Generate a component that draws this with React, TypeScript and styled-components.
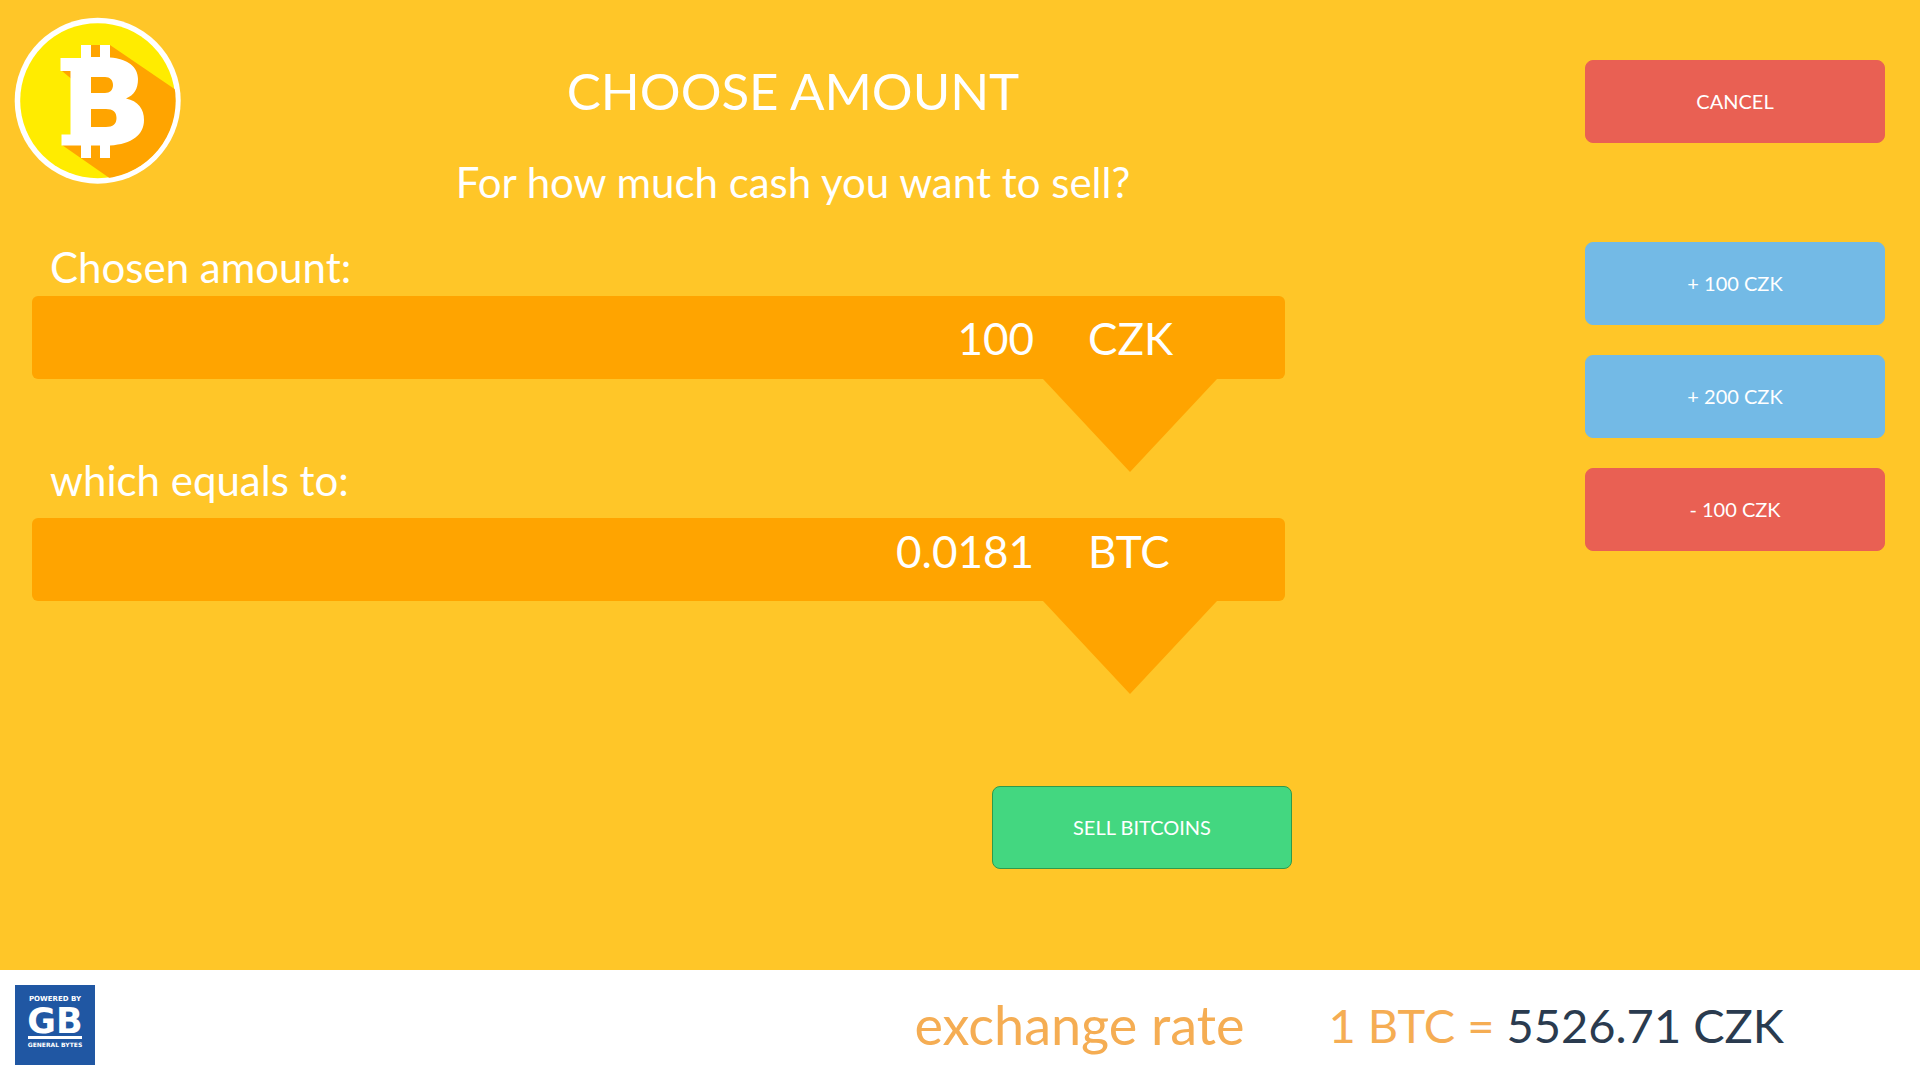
import React, { useState } from "react";
import styled, { createGlobalStyle } from "styled-components";

const GlobalStyle = createGlobalStyle`
  *, *::before, *::after { box-sizing: border-box; }
  body {
    margin: 0;
    background: #ffc628;
    color: #ffffff;
    font-family: Lato, "Open Sans", sans-serif;
  }
`;

const Screen = styled.div`
  display: flex;
  flex-direction: column;
  min-height: 100vh;
`;

const Main = styled.main`
  flex: 1;
  display: flex;
  gap: 180px;
  padding-right: 35px;
`;

const Content = styled.div`
  flex: 1;
  min-width: 0;
`;

const Header = styled.header`
  display: flex;
  align-items: flex-start;
  padding: 17px 0 0 14px;
`;

const Logo = styled.svg`
  flex: none;
  width: 167px;
  height: 167px;
`;

const Headings = styled.div`
  flex: 1;
  display: flex;
  flex-direction: column;
  gap: 31px;
  padding-top: 42px;
  text-align: center;
`;

const Title = styled.h1`
  margin: 0;
  font-size: 51px;
  line-height: 64px;
  font-weight: 400;
`;

const Subtitle = styled.p`
  margin: 0;
  font-size: 42px;
  line-height: 56px;
`;

const Converter = styled.form`
  display: flex;
  flex-direction: column;
  margin: 34px 113px 0 32px;
`;

const Panel = styled.div`
  margin-right: 7px;
`;

const Label = styled.label`
  display: block;
  padding-left: 18px;
  font-size: 42px;
  line-height: 46px;
`;

const Bar = styled.div<{ $raised?: boolean }>`
  display: flex;
  justify-content: flex-end;
  align-items: center;
  gap: 54px;
  height: 83px;
  padding-bottom: ${(p) => (p.$raised ? 18 : 0)}px;
  border-radius: 6px;
  background: #ffa400;
  font-size: 44px;
  line-height: 56px;
`;

const FirstBar = styled(Bar)`
  margin-top: 6px;
`;

const Unit = styled.span`
  width: 197px;
`;

const Link = styled.div`
  display: flex;
  justify-content: space-between;
  align-items: flex-start;
  min-height: 139px;
`;

const LinkLabel = styled(Label)`
  padding-top: 78px;
`;

const Arrow = styled.div`
  width: 174px;
  height: 93px;
  margin: 0 68px 0 auto;
  background: #ffa400;
  clip-path: polygon(0 0, 100% 0, 50% 100%);
`;

const Button = styled.button<{ $tone: string; $edge?: string }>`
  width: 300px;
  height: 83px;
  padding: 0 0 2px;
  border: 1px solid ${(p) => p.$edge ?? p.$tone};
  border-radius: 8px;
  background: ${(p) => p.$tone};
  color: #ffffff;
  font: 400 20px/28px Lato, "Open Sans", sans-serif;
  cursor: pointer;
`;

const SellButton = styled(Button)`
  align-self: flex-end;
  margin-top: 46px;
`;

const Side = styled.aside`
  display: flex;
  flex-direction: column;
  gap: 99px;
  padding-top: 60px;
`;

const Steps = styled.div`
  display: flex;
  flex-direction: column;
  gap: 30px;
`;

const Footer = styled.footer`
  display: flex;
  align-items: center;
  height: 110px;
  padding: 0 136px 0 15px;
  background: #ffffff;
  color: #f5ad53;
`;

const Badge = styled.div`
  display: flex;
  flex-direction: column;
  align-items: center;
  width: 80px;
  height: 80px;
  margin-right: auto;
  padding-top: 10px;
  background: #2057a3;
  color: #ffffff;
  font-family: "DejaVu Sans", sans-serif;
  font-weight: 700;
`;

const BadgeTop = styled.span`
  font-size: 7px;
  line-height: 8px;
`;

const BadgeMark = styled.span`
  margin-top: 3px;
  font-size: 35px;
  line-height: 30px;
`;

const BadgeBottom = styled.span`
  width: 54px;
  padding-top: 2px;
  border-top: 3px solid #ffffff;
  display: flex;
  justify-content: center;
  white-space: nowrap;
  font-size: 6px;
  line-height: 8px;
`;

const RateLabel = styled.span`
  margin-right: 84px;
  font-size: 54px;
  line-height: 66px;
`;

const Rate = styled.span`
  font-size: 47px;
  line-height: 64px;
`;

const Price = styled.span`
  color: #2a3b4f;
`;

const BTC_PER_CZK = 1 / 5526.71;

function BitcoinLogo() {
  return (
    <Logo viewBox="14 17 167 167" role="img" aria-label="Bitcoin">
      <clipPath id="disc">
        <circle cx="97.7" cy="100.7" r="78" />
      </clipPath>
      <circle cx="97.7" cy="100.7" r="83" fill="#ffffff" />
      <circle cx="97.7" cy="100.7" r="77.5" fill="#ffec00" />
      <path
        clipPath="url(#disc)"
        fill="#ffa400"
        d="M91 45H110L195 103V200H142L108 177L62 145L80 140V86L62 71L91 65Z"
      />
      <path
        fill="#ffffff"
        fillRule="evenodd"
        d="M81 45H91V57H100V45H110V57.5C128 59 138 67 138 79C138 89 134 95 126 98.500C138 101 144 109 144 120C144 135 132 144 110 145.500V158H100V145.500H91V158H81V145.500H61.500V134.500H70.500V71H60.500V58H81ZM91 77V93H105C110 93 113 90 113 85C113 80 110 77 105 77ZM91 109V127H106C113 127 116.500 124 116.500 118C116.500 112 113 109 106 109Z"
      />
    </Logo>
  );
}

export default function App() {
  const [amount, setAmount] = useState(100);
  const change = (step: number) => setAmount((a) => Math.max(0, a + step));

  return (
    <Screen>
      <GlobalStyle />
      <Main>
        <Content>
          <Header>
            <BitcoinLogo />
            <Headings>
              <Title>CHOOSE AMOUNT</Title>
              <Subtitle>For how much cash you want to sell?</Subtitle>
            </Headings>
          </Header>
          <Converter onSubmit={(e) => e.preventDefault()}>
            <Panel>
              <Label htmlFor="cash">Chosen amount:</Label>
              <FirstBar>
                <output id="cash">{amount}</output>
                <Unit>CZK</Unit>
              </FirstBar>
              <Link>
                <LinkLabel htmlFor="coins">which equals to:</LinkLabel>
                <Arrow />
              </Link>
              <Bar $raised>
                <output id="coins">{(amount * BTC_PER_CZK).toFixed(4)}</output>
                <Unit>BTC</Unit>
              </Bar>
              <Link>
                <Arrow />
              </Link>
            </Panel>
            <SellButton type="submit" $tone="#43d780" $edge="#2f9a4c">
              SELL BITCOINS
            </SellButton>
          </Converter>
        </Content>
        <Side>
          <Button type="button" $tone="#e96053">CANCEL</Button>
          <Steps>
            <Button type="button" $tone="#73bae6" onClick={() => change(100)}>+ 100 CZK</Button>
            <Button type="button" $tone="#73bae6" onClick={() => change(200)}>+ 200 CZK</Button>
            <Button type="button" $tone="#e96053" onClick={() => change(-100)}>- 100 CZK</Button>
          </Steps>
        </Side>
      </Main>
      <Footer>
        <Badge>
          <BadgeTop>POWERED BY</BadgeTop>
          <BadgeMark>GB</BadgeMark>
          <BadgeBottom>GENERAL BYTES</BadgeBottom>
        </Badge>
        <RateLabel>exchange rate</RateLabel>
        <Rate>
          1 BTC = <Price>5526.71 CZK</Price>
        </Rate>
      </Footer>
    </Screen>
  );
}
